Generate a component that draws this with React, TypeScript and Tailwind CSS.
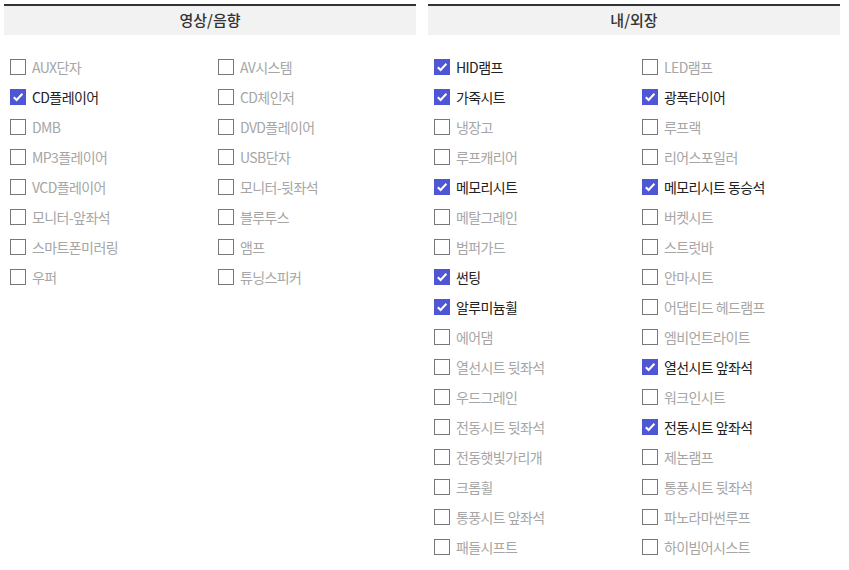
import React from 'react';

type Opt = { label: string; on?: boolean };

const av: Opt[] = [
  { label: 'AUX단자' },
  { label: 'AV시스템' },
  { label: 'CD플레이어', on: true },
  { label: 'CD체인저' },
  { label: 'DMB' },
  { label: 'DVD플레이어' },
  { label: 'MP3플레이어' },
  { label: 'USB단자' },
  { label: 'VCD플레이어' },
  { label: '모니터-뒷좌석' },
  { label: '모니터-앞좌석' },
  { label: '블루투스' },
  { label: '스마트폰미러링' },
  { label: '앰프' },
  { label: '우퍼' },
  { label: '튜닝스피커' },
];

const ext: Opt[] = [
  { label: 'HID램프', on: true },
  { label: 'LED램프' },
  { label: '가죽시트', on: true },
  { label: '광폭타이어', on: true },
  { label: '냉장고' },
  { label: '루프랙' },
  { label: '루프캐리어' },
  { label: '리어스포일러' },
  { label: '메모리시트', on: true },
  { label: '메모리시트 동승석', on: true },
  { label: '메탈그레인' },
  { label: '버켓시트' },
  { label: '범퍼가드' },
  { label: '스트럿바' },
  { label: '썬팅', on: true },
  { label: '안마시트' },
  { label: '알루미늄휠', on: true },
  { label: '어댑티드 헤드램프' },
  { label: '에어댐' },
  { label: '엠비언트라이트' },
  { label: '열선시트 뒷좌석' },
  { label: '열선시트 앞좌석', on: true },
  { label: '우드그레인' },
  { label: '워크인시트' },
  { label: '전동시트 뒷좌석' },
  { label: '전동시트 앞좌석', on: true },
  { label: '전동햇빛가리개' },
  { label: '제논램프' },
  { label: '크롬휠' },
  { label: '통풍시트 뒷좌석' },
  { label: '통풍시트 앞좌석' },
  { label: '파노라마썬루프' },
  { label: '패들시프트' },
  { label: '하이빔어시스트' },
];

function Check({ on }: { on?: boolean }) {
  if (on) {
    return (
      <span className="w-4 h-4 shrink-0 bg-[#4f56d6] flex items-center justify-center">
        <svg width="12" height="12" viewBox="0 0 12 12">
          <path d="M1.8 6.2 L4.6 9 L10.4 2.8" fill="none" stroke="#fff" strokeWidth="2" />
        </svg>
      </span>
    );
  }
  return <span className="w-4 h-4 shrink-0 border border-[#777] bg-white" />;
}

function Panel({ title, items }: { title: string; items: Opt[] }) {
  return (
    <section className="w-[412px]">
      <h3 className="h-[31px] border-t-2 border-[#333] bg-[#f2f2f2] flex items-center justify-center text-[15px] font-medium text-[#333]">
        {title}
      </h3>
      <ul className="grid grid-cols-[208px_1fr] pt-[17px] pl-[6px]">
        {items.map((o) => (
          <li key={o.label} className="h-[30px] flex items-center gap-[6px]">
            <Check on={o.on} />
            <span
              className={
                'text-[14px] tracking-[-0.6px] leading-none ' +
                (o.on ? 'text-[#222]' : 'text-[#a6a6a6]')
              }
            >
              {o.label}
            </span>
          </li>
        ))}
      </ul>
    </section>
  );
}

export default function App() {
  return (
    <div
      className="w-[849px] h-[570px] bg-white flex gap-3 pl-1 pt-[4px] overflow-hidden"
      style={{ fontFamily: '"Noto Sans CJK KR", "Noto Sans", sans-serif' }}
    >
      <Panel title="영상/음향" items={av} />
      <Panel title="내/외장" items={ext} />
    </div>
  );
}
